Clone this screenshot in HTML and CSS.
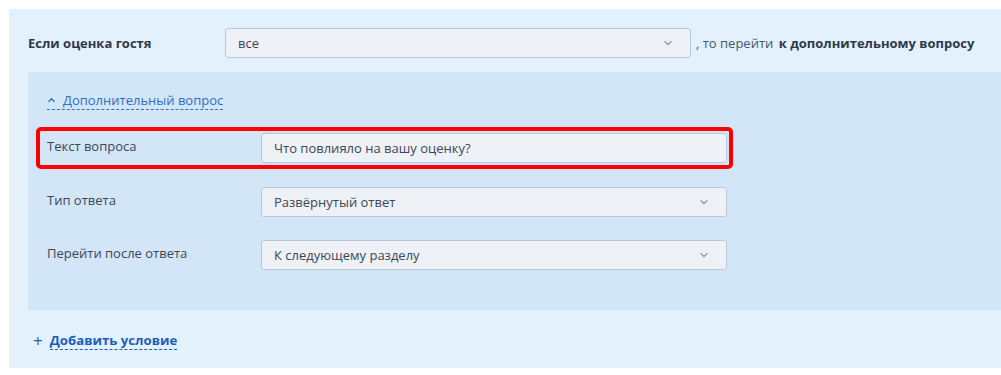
FILE: index.html
```html
<!DOCTYPE html>
<html lang="ru">
<head>
<meta charset="utf-8">
<link rel="stylesheet" href="styles.css">
</head>
<body>
<div class="panel">
  <div class="cond-row">
    <div class="cond-label">Если оценка гостя</div>
    <div class="select wide">
      <span>все</span>
      <svg class="chev" width="10" height="6" viewBox="0 0 10 6"><path d="M1.5 1.2 L5 4.5 L8.5 1.2" fill="none" stroke="#8c9cb0" stroke-width="1.3"/></svg>
    </div>
    <div class="cond-then">, то перейти <b>к дополнительному вопросу</b></div>
  </div>
  <div class="sub">
    <a class="toggle"><svg class="up" width="9" height="6" viewBox="0 0 9 6"><path d="M1.5 4.8 L4.5 1.8 L7.5 4.8" fill="none" stroke="#2f6fc0" stroke-width="1.4"/></svg><span>Дополнительный вопрос</span></a>
    <div class="rows">
      <div class="row highlight">
        <div class="row-label">Текст вопроса</div>
        <div class="select"><span>Что повлияло на вашу оценку?</span></div>
      </div>
      <div class="row">
        <div class="row-label">Тип ответа</div>
        <div class="select"><span>Развёрнутый ответ</span>
          <svg class="chev" width="10" height="6" viewBox="0 0 10 6"><path d="M1.5 1.2 L5 4.5 L8.5 1.2" fill="none" stroke="#8c9cb0" stroke-width="1.3"/></svg></div>
      </div>
      <div class="row">
        <div class="row-label">Перейти после ответа</div>
        <div class="select"><span>К следующему разделу</span>
          <svg class="chev" width="10" height="6" viewBox="0 0 10 6"><path d="M1.5 1.2 L5 4.5 L8.5 1.2" fill="none" stroke="#8c9cb0" stroke-width="1.3"/></svg></div>
      </div>
    </div>
  </div>
  <div class="add">
    <span class="plus">+</span><span class="add-text">Добавить условие</span>
  </div>
</div>
</body>
</html>
```
FILE: styles.css
```css
html, body {
  margin: 0;
  background: #ffffff;
}
body {
  padding: 9px 0 0 9px;
  font-family: "Open Sans", "Noto Sans", sans-serif;
  font-size: 13px;
  color: #3b4657;
}
.panel {
  background: #e3f1fd;
  height: 359px;
  box-sizing: border-box;
  padding-top: 19px;
}
.cond-row {
  display: flex;
  align-items: center;
  height: 30px;
  padding-left: 19px;
}
.cond-label {
  width: 197px;
  font-weight: 700;
  color: #2e3847;
}
.select {
  box-sizing: border-box;
  width: 466px;
  height: 30px;
  background: #eef2f6;
  border: 1px solid #b9c8d9;
  border-radius: 3px;
  display: flex;
  align-items: center;
  justify-content: space-between;
  padding: 0 17px 0 12px;
  color: #3b4657;
}
.chev {
  display: block;
}
.cond-then {
  margin-left: 5px;
  color: #4a5568;
}
.cond-then b {
  margin-left: 2px;
  color: #2e3847;
}
.sub {
  margin: 14px 0 0 19px;
  background: #d3e6f7;
  height: 238px;
  box-sizing: border-box;
  padding: 17px 0 0 19px;
}
.toggle {
  display: inline-flex;
  align-items: center;
  gap: 7px;
  line-height: 18px;
  color: #2f6fc0;
  border-bottom: 1px dashed #2f6fc0;
  font-size: 13px;
}
.rows {
  margin-top: 23px;
  display: flex;
  flex-direction: column;
  gap: 23.5px;
}
.row {
  display: flex;
  align-items: center;
  position: relative;
}
.row-label {
  width: 214px;
  color: #3b4657;
  margin-top: -4px;
}
.highlight::after {
  content: "";
  position: absolute;
  left: -11px;
  top: -6px;
  width: 697px;
  height: 42px;
  box-sizing: border-box;
  border: 4px solid #ff0000;
  border-radius: 5px;
}
.add {
  display: flex;
  align-items: center;
  padding: 21px 0 0 24px;
  color: #1f5cb8;
  font-weight: 700;
  font-size: 13.2px;
}
.plus {
  font-size: 17px;
  font-weight: 400;
  margin-right: 7px;
  line-height: 18px;
}
.add-text {
  line-height: 18px;
  border-bottom: 1px dashed #1f5cb8;
}
```
